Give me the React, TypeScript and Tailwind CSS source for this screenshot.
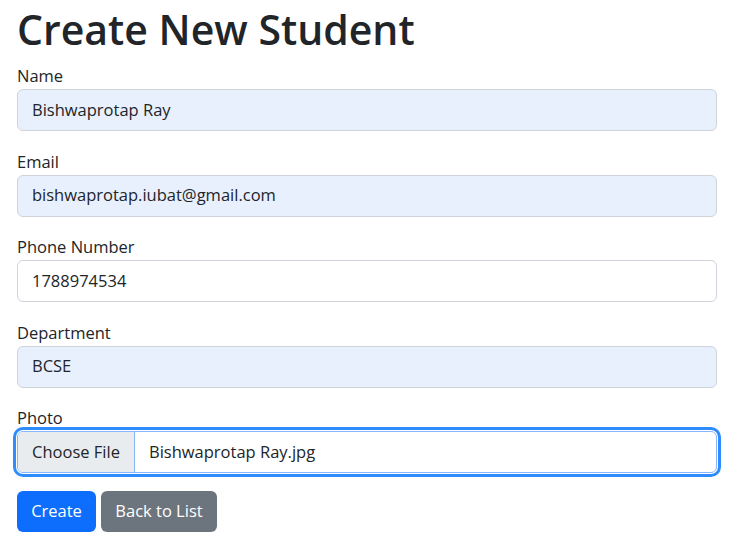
const fields = [
    { label: 'Name', value: 'Bishwaprotap Ray', filled: true },
    { label: 'Email', value: 'bishwaprotap.iubat@gmail.com', filled: true },
    { label: 'Phone Number', value: '1788974534', filled: false },
    { label: 'Department', value: 'BCSE', filled: true },
];

const App = () => {
    return (
        <div className="min-h-screen bg-white pl-[17px] pr-[24px] text-[#212529]" style={{ fontFamily: '"Open Sans", "Noto Sans", sans-serif' }}>
            <h1 className="mb-[6px] text-[41px] font-semibold leading-[59px] tracking-[0px]">Create New Student</h1>

            {fields.map((f) => (
                <div key={f.label} className="mb-[19.5px]">
                    <label className="block text-[16.5px] leading-[22px] mb-[2px] mt-[1px]">{f.label}</label>
                    <div
                        className={`h-[42px] rounded-[6px] border border-[#ced4da] px-[14px] flex items-center text-[16.5px] ${f.filled ? 'bg-[#e8f0fe]' : 'bg-white'}`}
                    >
                        {f.value}
                    </div>
                </div>
            ))}

            <div className="mb-[18px]">
                <label className="block text-[16.5px] leading-[22px] mb-[2px] mt-[1px]">Photo</label>
                <div className="h-[42px] rounded-[6px] border border-[#86b7fe] outline-[3px] outline-solid outline-[#2f8cff] outline-offset-[1px] flex items-stretch overflow-hidden bg-white text-[16.5px]">
                    <div className="w-[117px] bg-[#e9ecef] border-r border-[#86b7fe] flex items-center justify-center">Choose File</div>
                    <div className="flex items-center pl-[14px]">Bishwaprotap Ray.jpg</div>
                </div>
            </div>

            <div className="flex gap-[5px]">
                <button className="h-[41px] w-[79px] rounded-[6px] bg-[#0d6efd] text-white text-[16.5px]">Create</button>
                <button className="h-[41px] w-[116px] rounded-[6px] bg-[#6c757d] text-white text-[16.5px]">Back to List</button>
            </div>
        </div>
    );
};

export default App;
